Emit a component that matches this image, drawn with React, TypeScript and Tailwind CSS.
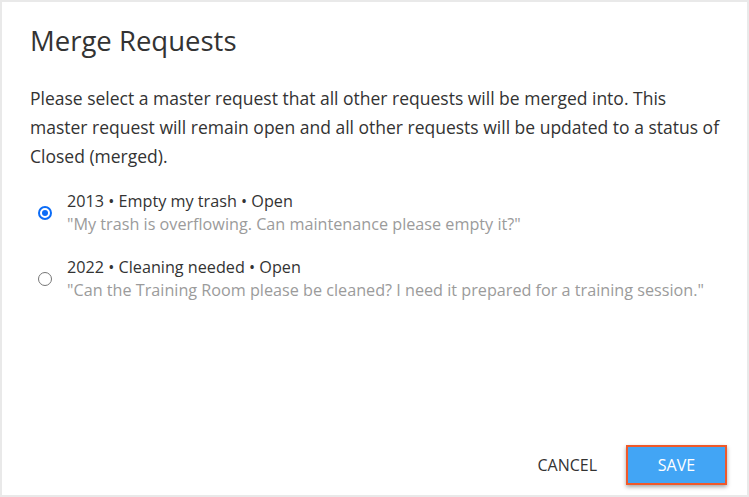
import React, { useState } from "react";

const requests = [
  {
    id: 2013,
    title: "Empty my trash",
    status: "Open",
    text: '"My trash is overflowing. Can maintenance please empty it?"',
  },
  {
    id: 2022,
    title: "Cleaning needed",
    status: "Open",
    text: '"Can the Training Room please be cleaned? I need it prepared for a training session."',
  },
];

const intro = [
  "Please select a master request that all other requests will be merged into. This",
  "master request will remain open and all other requests will be updated to a status of",
  "Closed (merged).",
];

export default function App() {
  const [selected, setSelected] = useState(2013);
  return (
    <div
      className="w-[749px] h-[497px] bg-[#e9e9e9] p-[2px] flex"
      style={{ fontFamily: '"Open Sans", "Noto Sans", sans-serif' }}
    >
      <div className="flex-1 bg-white flex flex-col pl-[28px] pr-[20px] pt-[20px] pb-[10px]">
        <h1 className="text-[27.5px] leading-[38px] text-[#333333] font-normal">Merge Requests</h1>
        <p className="mt-[24px] text-[17.5px] leading-[29px] text-[#333333] flex flex-col">
          {intro.map((line) => (
            <span key={line} className="whitespace-nowrap">
              {line}
            </span>
          ))}
        </p>
        <div className="mt-[19px] flex flex-col gap-[20px]">
          {requests.map((r) => {
            const on = selected === r.id;
            return (
              <label
                key={r.id}
                className="flex items-center cursor-pointer"
                onClick={() => setSelected(r.id)}
              >
                <span className="w-[32px] flex justify-center ml-[-1px] mr-[6px]">
                  <span
                    className={
                      on
                        ? "w-[14px] h-[14px] rounded-full border-2 border-[#0b6cf7] flex items-center justify-center"
                        : "w-[14px] h-[14px] rounded-full border border-[#767676] flex items-center justify-center"
                    }
                  >
                    {on && <span className="w-[6px] h-[6px] rounded-full bg-[#0b6cf7]" />}
                  </span>
                </span>
                <span className="flex flex-col">
                  <span className="text-[16.2px] leading-[23px] text-[#333333]">
                    {r.id} • {r.title} • {r.status}
                  </span>
                  <span className="text-[16.2px] leading-[23px] text-[#9b9b9b]">{r.text}</span>
                </span>
              </label>
            );
          })}
        </div>
        <div className="mt-auto flex justify-end items-center gap-[29px]">
          <button className="text-[16px] text-[#333333] py-[8px] ml-[1px]">CANCEL</button>
          <button className="w-[101px] h-[40px] bg-[#42a5f5] text-white text-[16px] border-2 border-[#f0592a] shadow-[0_2px_4px_rgba(0,0,0,0.35)]">
            SAVE
          </button>
        </div>
      </div>
    </div>
  );
}
